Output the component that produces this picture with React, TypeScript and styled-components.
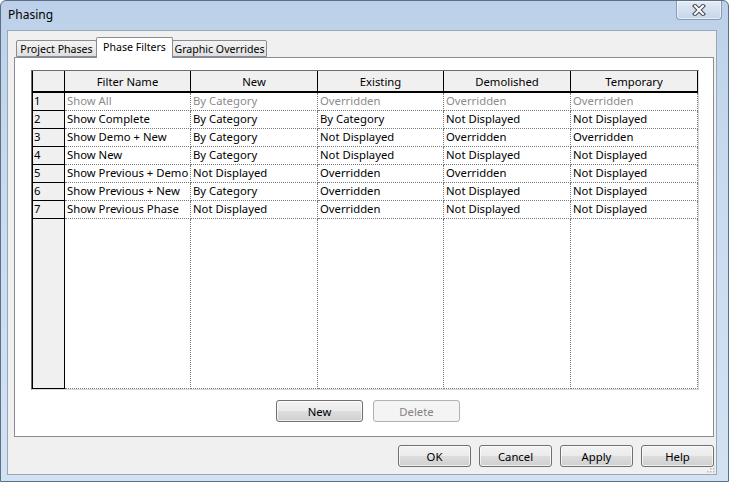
import styled, { createGlobalStyle } from "styled-components";

const GlobalStyle = createGlobalStyle`
  html, body {
    margin: 0;
    padding: 0;
    background: #ffffff;
  }
  * {
    box-sizing: border-box;
  }
`;

const FONT = `"Noto Sans", "Liberation Sans", sans-serif`;

const columns = ["Filter Name", "New", "Existing", "Demolished", "Temporary"];

const filters = [
  ["Show All", "By Category", "Overridden", "Overridden", "Overridden"],
  ["Show Complete", "By Category", "By Category", "Not Displayed", "Not Displayed"],
  ["Show Demo + New", "By Category", "Not Displayed", "Overridden", "Overridden"],
  ["Show New", "By Category", "Not Displayed", "Not Displayed", "Not Displayed"],
  ["Show Previous + Demo", "Not Displayed", "Overridden", "Overridden", "Not Displayed"],
  ["Show Previous + New", "By Category", "Overridden", "Not Displayed", "Not Displayed"],
  ["Show Previous Phase", "Not Displayed", "Overridden", "Not Displayed", "Not Displayed"],
];

const tabs = [
  { title: "Project Phases", width: 81 },
  { title: "Phase Filters", width: 77 },
  { title: "Graphic Overrides", width: 95 },
];

const Window = styled.div`
  width: 729px;
  height: 482px;
  display: flex;
  flex-direction: column;
  background: linear-gradient(180deg, #bcd1e9 0%, #c9dbef 40%, #d2e2f3 100%);
  border: 1px solid #5b6f87;
  border-radius: 6px 6px 0 0;
  font-family: ${FONT};
  font-size: 11.3px;
  color: #000;
  overflow: hidden;
`;

const TitleBar = styled.div`
  height: 29px;
  display: flex;
  align-items: flex-start;
  padding-left: 7px;
  flex-shrink: 0;
`;

const Title = styled.div`
  font-size: 12px;
  line-height: 28px;
  color: #000;
`;

const CloseButton = styled.div`
  margin-left: auto;
  margin-right: 6px;
  width: 46px;
  height: 19px;
  display: flex;
  align-items: center;
  justify-content: center;
  border: 1px solid #8a9bb1;
  border-top: none;
  border-radius: 0 0 4px 4px;
  background: linear-gradient(180deg, #e3ecf6 0%, #d3e0ef 50%, #c6d7ea 100%);
  box-shadow: inset 0 0 0 1px rgba(255, 255, 255, 0.55);
`;

const Client = styled.div`
  position: relative;
  flex: 1;
  margin: 0 11px 6px 6px;
  display: flex;
  flex-direction: column;
  background: #f0f0f0;
  border: 1px solid #98a6b8;
  padding: 6px 2px 7px 6px;
`;

const TabStrip = styled.div`
  display: flex;
  align-items: flex-end;
  height: 21px;
  margin-bottom: -1px;
  padding-left: 2px;
  position: relative;
  z-index: 1;
`;

const Tab = styled.div<{ $active?: boolean; $w: number }>`
  width: ${({ $w }) => $w}px;
  height: ${({ $active }) => ($active ? "21px" : "17px")};
  margin-bottom: ${({ $active }) => ($active ? "0" : "1px")};
  margin-left: -1px;
  display: flex;
  align-items: ${({ $active }) => ($active ? "flex-start" : "center")};
  justify-content: center;
  padding-top: ${({ $active }) => ($active ? "2px" : "1px")};
  border: 1px solid #898c95;
  border-bottom: ${({ $active }) => ($active ? "none" : "1px solid #898c95")};
  border-radius: 2px 2px 0 0;
  background: ${({ $active }) =>
    $active ? "#ffffff" : "linear-gradient(180deg, #f3f3f3 0%, #ebebeb 50%, #dedede 100%)"};
  white-space: nowrap;
  font-size: 10.6px;
  line-height: 14px;
  position: relative;
  z-index: ${({ $active }) => ($active ? 2 : 1)};
  &:first-child {
    margin-left: 0;
  }
`;

const Panel = styled.div`
  flex: 1;
  display: flex;
  flex-direction: column;
  background: #ffffff;
  border: 1px solid #898c95;
  padding: 12px 14px 14px 16px;
`;

const Grid = styled.div`
  flex: 1;
  display: grid;
  grid-template-columns: 33px 126px 127px 126px 127px 1fr;
  grid-template-rows: 22px repeat(7, 18px) 1fr;
  border-left: 1px solid #6e6e6e;
  border-top: 1px solid #6e6e6e;
  border-right: 1px solid #d9d9d9;
  border-bottom: 1px solid #d9d9d9;
  background: #ffffff;
`;

const Corner = styled.div`
  background: #f0f0f0;
  border-right: 1px solid #000;
  border-bottom: 2px solid #000;
  border-left: 1px solid #000;
`;

const HeaderCell = styled.div`
  background: #f0f0f0;
  border-right: 1px solid #000;
  border-bottom: 2px solid #000;
  display: flex;
  align-items: center;
  justify-content: center;
  white-space: nowrap;
  overflow: hidden;
`;

const RowHeader = styled.div`
  background: #f0f0f0;
  border-right: 1px solid #000;
  border-bottom: 1px solid #000;
  border-left: 1px solid #000;
  padding-left: 1px;
  line-height: 16px;
`;

const Cell = styled.div<{ $muted?: boolean }>`
  border-right: 1px dotted #7a7a7a;
  border-bottom: 1px dotted #7a7a7a;
  padding-left: 2px;
  line-height: 16px;
  white-space: nowrap;
  overflow: hidden;
  color: ${({ $muted }) => ($muted ? "#8c8c8c" : "#000")};
`;

const ButtonRow = styled.div`
  display: flex;
  justify-content: center;
  gap: 10px;
  margin-top: 10px;
  padding-left: 6px;
`;

const Footer = styled.div`
  display: flex;
  justify-content: flex-end;
  gap: 8px;
  margin-top: 8px;
`;

const Button = styled.div<{ $disabled?: boolean }>`
  width: 87px;
  height: 22px;
  display: flex;
  align-items: center;
  justify-content: center;
  border: 1px solid ${({ $disabled }) => ($disabled ? "#adb2b5" : "#707070")};
  border-radius: 3px;
  color: ${({ $disabled }) => ($disabled ? "#838383" : "#000")};
  background: ${({ $disabled }) =>
    $disabled
      ? "#f4f4f4"
      : "linear-gradient(180deg, #f2f2f2 0%, #ebebeb 49%, #dddddd 51%, #cfcfcf 100%)"};
  box-shadow: ${({ $disabled }) => ($disabled ? "none" : "inset 0 0 0 1px rgba(255,255,255,0.7)")};
`;

const FooterButton = styled(Button)`
  width: 73px;
  height: 22px;
`;

const Grip = styled.svg`
  position: absolute;
  right: 1px;
  bottom: 1px;
`;

const CloseGlyph = () => (
  <svg width="14" height="12" viewBox="0 0 14 12">
    <path d="M3 2 L11 10 M11 2 L3 10" stroke="#4a4f57" strokeWidth="4.2" strokeLinecap="square" />
    <path d="M3 2 L11 10 M11 2 L3 10" stroke="#ffffff" strokeWidth="2" strokeLinecap="square" />
  </svg>
);

const App = () => {
  return (
    <>
      <GlobalStyle />
      <Window>
        <TitleBar>
          <Title>Phasing</Title>
          <CloseButton>
            <CloseGlyph />
          </CloseButton>
        </TitleBar>
        <Client>
          <TabStrip>
            {tabs.map(({ title, width }) => (
              <Tab key={title} $w={width} $active={title === "Phase Filters"}>
                {title}
              </Tab>
            ))}
          </TabStrip>
          <Panel>
            <Grid>
              <Corner />
              {columns.map((c) => (
                <HeaderCell key={c}>{c}</HeaderCell>
              ))}
              {filters.map((row, i) => (
                <>
                  <RowHeader key={`h${i}`}>{i + 1}</RowHeader>
                  {row.map((value, j) => (
                    <Cell key={`${i}-${j}`} $muted={i === 0}>
                      {value}
                    </Cell>
                  ))}
                </>
              ))}
              <RowHeader />
              {columns.map((c) => (
                <Cell key={`fill-${c}`} />
              ))}
            </Grid>
            <ButtonRow>
              <Button>New</Button>
              <Button $disabled>Delete</Button>
            </ButtonRow>
          </Panel>
          <Footer>
            <FooterButton>OK</FooterButton>
            <FooterButton>Cancel</FooterButton>
            <FooterButton>Apply</FooterButton>
            <FooterButton>Help</FooterButton>
          </Footer>
          <Grip width="8" height="8" viewBox="0 0 8 8">
            {[
              [6, 0],
              [6, 3],
              [3, 3],
              [6, 6],
              [3, 6],
              [0, 6],
            ].map(([x, y]) => (
              <rect key={`${x}-${y}`} x={x} y={y} width="1.5" height="1.5" fill="#b8b8b8" />
            ))}
          </Grip>
        </Client>
      </Window>
    </>
  );
};

export default App;
